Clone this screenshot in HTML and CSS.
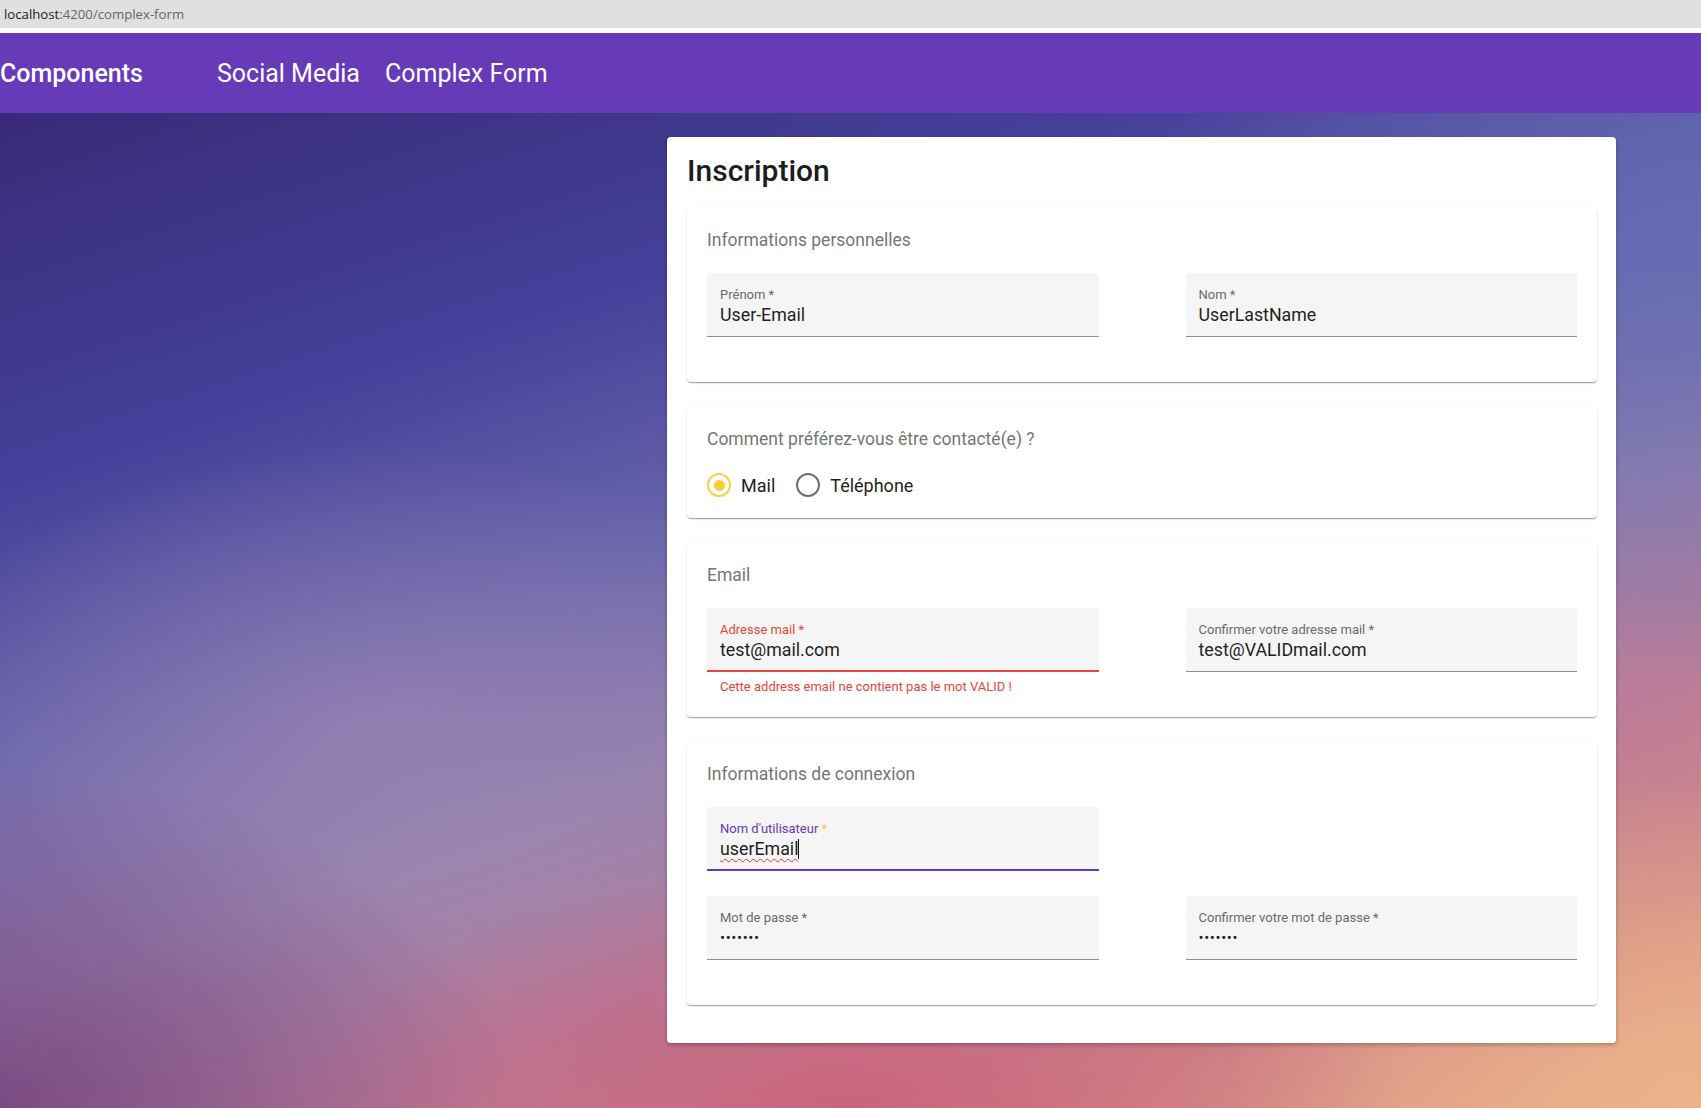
FILE: index.html
```html
<!DOCTYPE html>
<html lang="fr">
<head>
<meta charset="utf-8">
<title>Complex Form</title>
<link rel="stylesheet" href="styles.css">
</head>
<body>
<div class="urlbar"><span class="host">localhost</span>:4200/complex-form</div>
<header class="toolbar">
  <span class="brand">Components</span>
  <nav class="nav">
    <a class="nav-link">Social Media</a>
    <a class="nav-link">Complex Form</a>
  </nav>
</header>
<main class="main">
  <section class="card">
    <h1 class="title">Inscription</h1>

    <div class="panel">
      <h2 class="panel-title">Informations personnelles</h2>
      <div class="fields">
        <div class="field-wrap">
          <div class="field"><span class="field-label">Prénom *</span><span class="field-value">User-Email</span></div>
          <div class="subscript"></div>
        </div>
        <div class="field-wrap">
          <div class="field"><span class="field-label">Nom *</span><span class="field-value">UserLastName</span></div>
          <div class="subscript"></div>
        </div>
      </div>
    </div>

    <div class="panel panel-radio">
      <h2 class="panel-title">Comment préférez-vous être contacté(e) ?</h2>
      <div class="radios">
        <div class="radio"><span class="radio-circle checked"></span><span class="radio-label">Mail</span></div>
        <div class="radio"><span class="radio-circle"></span><span class="radio-label">Téléphone</span></div>
      </div>
    </div>

    <div class="panel">
      <h2 class="panel-title">Email</h2>
      <div class="fields">
        <div class="field-wrap">
          <div class="field invalid"><span class="field-label">Adresse mail *</span><span class="field-value">test@mail.com</span></div>
          <div class="subscript error">Cette address email ne contient pas le mot VALID !</div>
        </div>
        <div class="field-wrap">
          <div class="field"><span class="field-label">Confirmer votre adresse mail *</span><span class="field-value">test@VALIDmail.com</span></div>
          <div class="subscript"></div>
        </div>
      </div>
    </div>

    <div class="panel">
      <h2 class="panel-title">Informations de connexion</h2>
      <div class="fields">
        <div class="field-wrap">
          <div class="field focused"><span class="field-label">Nom d'utilisateur <span class="req">*</span></span><span class="field-value"><span class="spell">userEmail</span><span class="caret"></span></span></div>
          <div class="subscript"></div>
        </div>
        <div class="field-wrap"></div>
        <div class="field-wrap">
          <div class="field"><span class="field-label">Mot de passe *</span><span class="field-value dots">•••••••</span></div>
          <div class="subscript"></div>
        </div>
        <div class="field-wrap">
          <div class="field"><span class="field-label">Confirmer votre mot de passe *</span><span class="field-value dots">•••••••</span></div>
          <div class="subscript"></div>
        </div>
      </div>
    </div>
  </section>
</main>
</body>
</html>
```

FILE: styles.css
```css
* { box-sizing: border-box; }

html, body {
  margin: 0;
  padding: 0;
}

body {
  font-family: Roboto, "Liberation Sans", Arial, sans-serif;
  min-height: 100vh;
  display: flex;
  flex-direction: column;
  background: #fff;
}

.urlbar {
  height: 28px;
  margin-bottom: 5px;
  background: #dfe0e2;
  font-family: "Open Sans", "Noto Sans", sans-serif;
  font-size: 13.2px;
  line-height: 28px;
  padding-left: 4px;
  color: #666;
}

.host { color: #222; }

.toolbar {
  height: 80px;
  background: #673ab7;
  color: #fff;
  display: flex;
  align-items: center;
  font-size: 25px;
  padding-top: 1px;
}

.brand {
  font-weight: 500;
}

.nav {
  display: flex;
  gap: 25px;
  margin-left: 74px;
}

.nav-link {
  color: #fff;
  text-decoration: none;
  font-weight: 400;
}

.main {
  flex: 1;
  display: flex;
  justify-content: flex-end;
  align-items: flex-start;
  padding: 24px 85px 40px 0;
  background:
    radial-gradient(ellipse 650px 420px at 0% 100%, rgba(115, 65, 125, 0.85), rgba(115, 65, 125, 0) 80%),
    radial-gradient(ellipse 700px 300px at 50% 100%, rgba(200, 90, 120, 0.75), rgba(200, 90, 120, 0) 80%),
    radial-gradient(ellipse 650px 380px at 22% 62%, rgba(165, 140, 180, 0.55), rgba(165, 140, 180, 0) 75%),
    radial-gradient(ellipse 600px 420px at 100% 100%, rgba(236, 180, 138, 0.95), rgba(236, 180, 138, 0) 80%),
    radial-gradient(ellipse 700px 520px at 100% 15%, rgba(98, 108, 180, 0.75), rgba(98, 108, 180, 0) 80%),
    linear-gradient(162deg, #382a78 0%, #45409a 24%, #6a66ac 42%, #9682ae 57%, #bb7c98 72%, #d08888 86%, #e4a888 100%);
}

.card {
  width: 949px;
  background: #fff;
  border-radius: 4px;
  box-shadow: 0 2px 4px rgba(0, 0, 0, 0.25);
  padding: 16px 19px 38px 20px;
}

.title {
  margin: 0 0 19px;
  font-size: 30px;
  line-height: 36px;
  font-weight: 500;
  color: #1d1d1d;
}

.panel {
  background: #fff;
  border-radius: 4px;
  box-shadow: 0 2px 1px -1px rgba(0, 0, 0, 0.2), 0 1px 1px 0 rgba(0, 0, 0, 0.14), 0 1px 3px 0 rgba(0, 0, 0, 0.12);
  padding: 20px 20px 23px;
  margin-bottom: 25px;
}

.panel:last-child { margin-bottom: 0; }

.panel-radio { padding-bottom: 13px; }

.panel-title {
  margin: 0 0 21px;
  font-size: 17.5px;
  line-height: 24px;
  font-weight: 400;
  color: #767676;
}

.fields {
  display: grid;
  grid-template-columns: 1fr 1fr;
  column-gap: 87px;
  row-gap: 3px;
}

.field {
  height: 64px;
  background: #f5f5f5;
  border-radius: 4px 4px 0 0;
  border-bottom: 1px solid #8e8e8e;
  padding: 14px 13px 0;
  display: flex;
  flex-direction: column;
}

.field-label {
  font-size: 13px;
  line-height: 16px;
  color: #6b6b6b;
  white-space: nowrap;
}

.field-value {
  font-size: 17.8px;
  line-height: 24px;
  color: #1f1f1f;
  white-space: nowrap;
}

.field-value.dots {
  font-size: 15px;
  letter-spacing: 0.6px;
  color: #222;
}

.field.invalid {
  border-bottom: 2px solid #e8453c;
}

.field.invalid .field-label { color: #e8453c; }

.field.focused {
  border-bottom: 2px solid #673ab7;
}

.field.focused .field-label { color: #673ab7; }

.req { color: #f2c94c; }

.spell {
  text-decoration: underline wavy #e53935;
  text-decoration-thickness: 1px;
  text-underline-offset: 3px;
}

.caret {
  display: inline-block;
  width: 1px;
  height: 20px;
  background: #111;
  vertical-align: -4px;
}

.subscript {
  height: 22px;
  padding: 7px 13px 0;
  font-size: 13px;
  line-height: 16px;
}

.subscript.error { color: #e8453c; }

.radios {
  margin-top: -7px;
  height: 40px;
  display: flex;
  align-items: center;
  gap: 21px;
}

.radio {
  display: flex;
  align-items: center;
  gap: 10px;
}

.radio-circle {
  width: 24px;
  height: 24px;
  border-radius: 50%;
  border: 2px solid #6f6f6f;
  display: flex;
  align-items: center;
  justify-content: center;
}

.radio-circle.checked {
  border-color: #f9d24a;
}

.radio-circle.checked::after {
  content: "";
  width: 11px;
  height: 11px;
  border-radius: 50%;
  background: #fbcd35;
}

.radio-label {
  font-size: 18px;
  color: #1f1f1f;
}
```
